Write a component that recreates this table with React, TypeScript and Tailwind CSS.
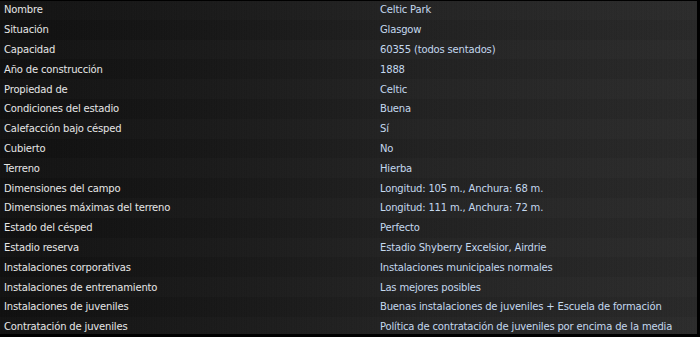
const rows: [string, string][] = [
  ['Nombre', 'Celtic Park'],
  ['Situación', 'Glasgow'],
  ['Capacidad', '60355 (todos sentados)'],
  ['Año de construcción', '1888'],
  ['Propiedad de', 'Celtic'],
  ['Condiciones del estadio', 'Buena'],
  ['Calefacción bajo césped', 'Sí'],
  ['Cubierto', 'No'],
  ['Terreno', 'Hierba'],
  ['Dimensiones del campo', 'Longitud: 105 m., Anchura: 68 m.'],
  ['Dimensiones máximas del terreno', 'Longitud: 111 m., Anchura: 72 m.'],
  ['Estado del césped', 'Perfecto'],
  ['Estadio reserva', 'Estadio Shyberry Excelsior, Airdrie'],
  ['Instalaciones corporativas', 'Instalaciones municipales normales'],
  ['Instalaciones de entrenamiento', 'Las mejores posibles'],
  ['Instalaciones de juveniles', 'Buenas instalaciones de juveniles + Escuela de formación'],
  ['Contratación de juveniles', 'Política de contratación de juveniles por encima de la media'],
];

export default function App() {
  return (
    <div className="w-[700px] h-[337px] bg-black">
      <div className="relative w-[697px] h-[334px] border-t border-black overflow-hidden bg-[linear-gradient(90deg,#101010_0%,#181818_30%,#222222_60%,#2a2a2a_100%)] font-['DejaVu_Sans',sans-serif] text-[10px] tracking-[-0.17px]">
        {/* brushed texture */}
        <div className="absolute inset-0 opacity-40 bg-[repeating-linear-gradient(90deg,rgba(255,255,255,0.04)_0px,rgba(0,0,0,0.15)_1px,rgba(255,255,255,0.02)_3px,rgba(0,0,0,0.1)_5px)]" />
        <div className="relative flex flex-col -mt-px">
          {rows.map(([label, value]) => (
            <div key={label} className="flex items-center h-[19.8px] odd:bg-white/[0.015]">
              <span className="w-[380px] shrink-0 pl-1 text-[#e6e6e6] whitespace-nowrap">{label}</span>
              <span className="text-[#c4d8ee] whitespace-nowrap">{value}</span>
            </div>
          ))}
        </div>
      </div>
    </div>
  );
}
